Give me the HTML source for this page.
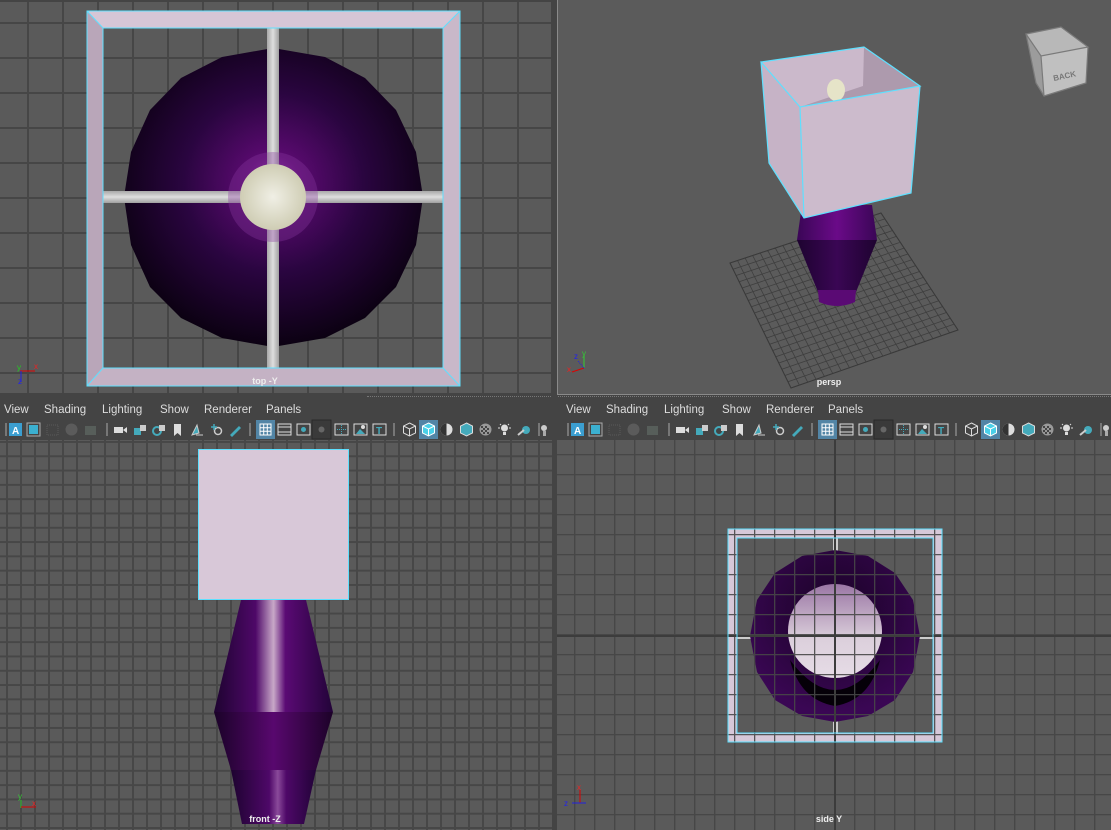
<!DOCTYPE html>
<html><head><meta charset="utf-8">
<style>
*{margin:0;padding:0;box-sizing:border-box}
body{width:1111px;height:830px;background:#444;overflow:hidden;position:relative;font-family:"Liberation Sans",sans-serif}
.vp{position:absolute;background-color:#5a5a5a;overflow:hidden}
.lbl{position:absolute;color:#eee;font-size:9px;font-weight:bold;transform:translateX(-50%)}
.menu{position:absolute;height:22px;background:#444;color:#ddd;font-size:11.5px}
.menu span{position:absolute;top:6px}
.tb{position:absolute;top:420px;height:19px;width:552px;background:#444}
.ic{position:absolute;top:2px;width:15px;height:15px}
svg{position:absolute;left:0;top:0}
</style></head><body>

<!-- top-left viewport -->
<div class="vp" style="left:0;top:2px;width:551px;height:391px;
background-image:linear-gradient(#464646 2px,transparent 2px),linear-gradient(90deg,#464646 2px,transparent 2px);
background-size:35px 35px;background-position:27px 20px">
<svg width="551" height="391" viewBox="0 2 551 391">
<defs>
<radialGradient id="sph" cx="0.5" cy="0.45" r="0.6">
<stop offset="0" stop-color="#8a2aa0"/><stop offset="0.15" stop-color="#5a0a70"/><stop offset="0.5" stop-color="#2a0540"/><stop offset="1" stop-color="#050008"/></radialGradient>
<radialGradient id="ball" cx="0.5" cy="0.5" r="0.5"><stop offset="0" stop-color="#f0efe5"/><stop offset="1" stop-color="#cfcdb4"/></radialGradient>
<linearGradient id="rodv" x1="0" x2="1"><stop offset="0" stop-color="#a9a9a9"/><stop offset="0.5" stop-color="#dedede"/><stop offset="1" stop-color="#a0a0a0"/></linearGradient>
<linearGradient id="rodh" x1="0" x2="0" y1="0" y2="1"><stop offset="0" stop-color="#a9a9a9"/><stop offset="0.5" stop-color="#dedede"/><stop offset="1" stop-color="#a0a0a0"/></linearGradient>
</defs>
<polygon points="273,48 325,57 365,78 396,110 416,152 423,197 416,245 396,287 365,318 325,338 273,347 222,338 181,318 150,287 131,245 124,197 131,152 150,110 181,78 222,57" fill="url(#sph)"/>
<rect x="267" y="28" width="12" height="340" fill="url(#rodv)"/>
<rect x="103" y="191" width="340" height="12" fill="url(#rodh)"/>
<circle cx="273" cy="197" r="45" fill="#8a3aa0" opacity="0.35"/>
<circle cx="273" cy="197" r="33" fill="url(#ball)"/>
<path d="M87,11H460V386H87Z M103,28V368H443V28Z" fill="#d6c6d6" fill-rule="evenodd"/>
<path d="M87,11L103,28V368L87,386Z" fill="#b9a6b9"/>
<path d="M87,386L103,368H443L460,386Z" fill="#c4b2c4"/>
<path d="M460,11L443,28V368L460,386Z" fill="#c9b8c9"/>
<path d="M87,11H460V386H87Z M103,28V368H443V28Z M87,11L103,28 M460,11L443,28 M87,386L103,368 M460,386L443,368" fill="none" stroke="#5ee0ff" stroke-width="1"/>
<line x1="20" y1="371" x2="35" y2="371" stroke="#d00" stroke-width="1"/>
<line x1="21" y1="371" x2="21" y2="382" stroke="#22d" stroke-width="1"/>
<text x="17" y="370" fill="#2c2" font-size="8" font-family="Liberation Sans">y</text>
<text x="34" y="369" fill="#e22" font-size="8" font-family="Liberation Sans">x</text>
<text x="18" y="384" fill="#22e" font-size="8" font-family="Liberation Sans">z</text>
</svg>
<div class="lbl" style="left:265px;top:374px">top -Y</div>
</div>

<!-- top-right viewport -->
<div class="vp" style="left:557px;top:0;width:554px;height:395px;background:#5b5b5b;border-left:1px solid #8a8a8a;border-bottom:1px solid #8a8a8a">
<svg width="554" height="395" viewBox="557 0 554 395">
<defs>
<linearGradient id="vase" x1="0" x2="1"><stop offset="0" stop-color="#3a0656"/><stop offset="0.5" stop-color="#6a0a88"/><stop offset="1" stop-color="#3a0656"/></linearGradient>
<linearGradient id="vase2" x1="0" x2="1"><stop offset="0" stop-color="#1e0330"/><stop offset="0.5" stop-color="#3a0654"/><stop offset="1" stop-color="#1e0330"/></linearGradient>
</defs>
<g stroke="#3e3e3e" stroke-width="0.8" fill="none" id="pgrid"></g>
<polygon points="729,263 880,213 957,330 790,388" fill="none" stroke="#3a3a3a"/>
<path d="M801,205 L871,205 L876,240 L796,240Z" fill="url(#vase)"/>
<path d="M796,240 L876,240 L855,292 L817,292Z" fill="url(#vase2)"/>
<path d="M817,290 L855,290 L854,302 Q836,310 818,302Z" fill="#5a0a74"/>
<polygon points="760,62 863,47 919,86 799,107" fill="#ad9aad"/>
<polygon points="760,62 863,47 862,86 799,107" fill="#cbb9cb"/>
<ellipse cx="835" cy="90" rx="9" ry="11" fill="#e6e4c8"/>
<polygon points="760,62 799,107 803,218 768,163" fill="#c6b3c6"/>
<polygon points="799,107 919,86 910,193 803,218" fill="#ccbbcc"/>
<path d="M760,62L863,47L919,86L799,107Z M760,62L768,163L803,218L910,193L919,86 M799,107L803,218" fill="none" stroke="#5ee0ff" stroke-width="1.2"/>
<polygon points="1025,34 1060,27 1087,47 1040,56" fill="#b8b8b8"/>
<polygon points="1025,34 1040,56 1043,96 1035,83" fill="#9c9c9c"/>
<polygon points="1040,56 1087,47 1085,83 1043,96" fill="#c0c0c0"/>
<path d="M1025,34L1060,27L1087,47L1040,56Z M1040,56L1043,96 M1087,47L1085,83L1043,96L1035,83L1025,34" fill="none" stroke="#7a7a7a" stroke-width="1.2"/>
<text x="1052" y="79" fill="#777" font-size="8" font-weight="bold" font-family="Liberation Sans" transform="rotate(-12 1062 76)">BACK</text>
<line x1="583" y1="355" x2="583" y2="368" stroke="#3c3"/>
<line x1="583" y1="368" x2="571" y2="372" stroke="#d00"/>
<line x1="583" y1="368" x2="577" y2="361" stroke="#22d" stroke-dasharray="1,1"/>
<text x="581" y="356" fill="#3c3" font-size="8">y</text>
<text x="573" y="359" fill="#22e" font-size="8">z</text>
<text x="566" y="372" fill="#e22" font-size="8">x</text>
</svg>
<div class="lbl" style="left:271px;top:377px">persp</div>
</div>
<div style="position:absolute;left:367px;top:396px;width:744px;height:1px;border-top:1px dotted #777"></div>

<!-- bottom menus -->
<div class="menu" style="left:0;top:398px;width:552px"><span style="left:4px">View</span><span style="left:44px">Shading</span><span style="left:102px">Lighting</span><span style="left:160px">Show</span><span style="left:204px">Renderer</span><span style="left:266px">Panels</span></div>
<div class="menu" style="left:557px;top:398px;width:554px"><span style="left:9px">View</span><span style="left:49px">Shading</span><span style="left:107px">Lighting</span><span style="left:165px">Show</span><span style="left:209px">Renderer</span><span style="left:271px">Panels</span></div>
<div class="tb" id="tb1" style="left:0"></div>
<div class="tb" id="tb2" style="left:562px;width:549px"></div>

<!-- front viewport -->
<div class="vp" style="left:0;top:440px;width:552px;height:390px;
background-image:linear-gradient(#474747 2px,transparent 2px),linear-gradient(90deg,#474747 2px,transparent 2px);
background-size:14px 14.3px;background-position:6px 1px">
<svg width="552" height="390" viewBox="0 440 552 390">
<defs>
<linearGradient id="fv" x1="0" x2="1"><stop offset="0" stop-color="#1e0330"/><stop offset="0.35" stop-color="#4e0868"/><stop offset="0.5" stop-color="#c8a8c8"/><stop offset="0.6" stop-color="#5a0a74"/><stop offset="1" stop-color="#220338"/></linearGradient>
<linearGradient id="fv2" x1="0" x2="1"><stop offset="0" stop-color="#1a0228"/><stop offset="0.5" stop-color="#58086e"/><stop offset="1" stop-color="#1c0228"/></linearGradient>
<linearGradient id="fv3" x1="0" x2="1"><stop offset="0" stop-color="#1e0330"/><stop offset="0.45" stop-color="#4e0868"/><stop offset="0.55" stop-color="#8a4a9a"/><stop offset="0.65" stop-color="#4e0868"/><stop offset="1" stop-color="#220338"/></linearGradient>
</defs>
<path d="M241,600 L306,600 L333,712 L214,712Z" fill="url(#fv)"/>
<path d="M214,712 L333,712 L316,770 L231,770Z" fill="url(#fv2)"/>
<path d="M231,770 L316,770 L304,824 L242,824Z" fill="url(#fv3)"/>
<rect x="198.5" y="449.5" width="150" height="150" fill="#d8c8d8" stroke="#5ee0ff"/>
<line x1="21" y1="800" x2="21" y2="808" stroke="#3c3"/>
<line x1="21" y1="807" x2="36" y2="807" stroke="#d00"/>
<text x="18" y="799" fill="#3c3" font-size="8">y</text>
<text x="32" y="806" fill="#e22" font-size="8">x</text>
</svg>
<div class="lbl" style="left:265px;top:374px">front -Z</div>
</div>

<!-- side viewport -->
<div class="vp" style="left:557px;top:440px;width:554px;height:390px">
<svg width="554" height="390" viewBox="557 440 554 390">
<defs>
<radialGradient id="ring" cx="0.5" cy="0.35" r="0.6"><stop offset="0" stop-color="#1a0326"/><stop offset="0.6" stop-color="#2c0540"/><stop offset="1" stop-color="#3a0754"/></radialGradient>
<linearGradient id="inn" x1="0" y1="0" x2="0" y2="1"><stop offset="0" stop-color="#9a76a4"/><stop offset="0.6" stop-color="#dcd0dc"/><stop offset="1" stop-color="#e6dce6"/></linearGradient>
<pattern id="sg" width="20" height="20" patternUnits="userSpaceOnUse" x="14" y="14"><path d="M0,0.5H20M0.5,0V20" stroke="#474747" stroke-width="1.6" fill="none"/></pattern>
</defs>
<rect x="557" y="440" width="554" height="390" fill="#5a5a5a"/>
<rect x="557" y="440" width="554" height="390" fill="url(#sg)"/>
<path d="M728,529H942V742H728Z M737,538V733H933V538Z" fill="#d6c8d8" fill-rule="evenodd"/>
<rect x="833" y="538" width="5" height="14" fill="#ccc"/>
<rect x="833" y="720" width="5" height="13" fill="#ccc"/>
<rect x="737" y="634" width="14" height="5" fill="#ccc"/>
<rect x="919" y="634" width="14" height="5" fill="#ccc"/>
<polygon points="835,550 868,556 895,573 913,600 920,636 913,672 895,700 868,716 835,722 802,716 775,700 757,672 750,636 757,600 775,573 802,556" fill="url(#ring)"/>
<path d="M790,660 Q835,720 880,660 Q870,700 835,706 Q800,700 790,660Z" fill="#050008"/>
<circle cx="835" cy="631" r="47" fill="url(#inn)"/>
<rect x="557" y="440" width="554" height="390" fill="url(#sg)" opacity="0.9"/>
<line x1="835" y1="440" x2="835" y2="830" stroke="#3c3c3c" stroke-width="2"/>
<line x1="557" y1="636" x2="1111" y2="636" stroke="#3c3c3c" stroke-width="2"/>
<path d="M728,529H942V742H728Z M737,538V733H933V538Z" fill="none" stroke="#5ee0ff" stroke-width="1"/>
<line x1="580" y1="790" x2="580" y2="803" stroke="#d00"/>
<line x1="572" y1="803" x2="586" y2="803" stroke="#22d"/>
<text x="577" y="790" fill="#e22" font-size="8">x</text>
<text x="564" y="806" fill="#22e" font-size="8">z</text>
</svg>
<div class="lbl" style="left:272px;top:374px">side Y</div>
</div>

<div style="position:absolute;left:552px;top:0;width:5px;height:830px;background:#444"></div>

<script>
(function(){
 var g=document.getElementById('pgrid');var L=[729,263],T=[880,213],R=[957,330],B=[790,388];
 function lerp(a,b,t){return [a[0]+(b[0]-a[0])*t,a[1]+(b[1]-a[1])*t]}
 var s='',n=20;
 for(var i=0;i<=n;i++){var t=i/n;var p=lerp(L,T,t),q=lerp(B,R,t);s+='M'+p[0]+','+p[1]+'L'+q[0]+','+q[1];
 p=lerp(L,B,t);q=lerp(T,R,t);s+='M'+p[0]+','+p[1]+'L'+q[0]+','+q[1];}
 var path=document.createElementNS('http://www.w3.org/2000/svg','path');path.setAttribute('d',s);g.appendChild(path);
})();
(function(){
 var xs=[15,33,52,71,90,120,139,158,177,196,216,234,265,284,303,321,341,360,379,409,428,446,466,485,504,523,546];
 var seps=[5,106,249,393,538];
 var icons={
 15:'<rect x="1" y="1" width="13" height="13" fill="#3b9ed0"/><text x="4" y="12" fill="#fff" font-size="10" font-weight="bold" font-family="Liberation Sans">A</text>',
 33:'<rect x="1" y="1" width="13" height="13" fill="none" stroke="#aaa"/><rect x="3" y="3" width="9" height="9" fill="#3bb0d0"/>',
 52:'<rect x="2" y="3" width="11" height="10" fill="none" stroke="#5a5a5a" stroke-dasharray="1,1"/>',
 71:'<circle cx="7.5" cy="7.5" r="6" fill="#5b5b5b"/>',
 90:'<rect x="2" y="4" width="11" height="9" fill="#575e5a"/>',
 120:'<rect x="1" y="5" width="9" height="6" fill="#ddd"/><path d="M10,8l4,-3v6z" fill="#ddd"/>',
 139:'<rect x="2" y="6" width="7" height="7" fill="#4ab"/><rect x="8" y="3" width="6" height="6" fill="#ccc"/>',
 158:'<circle cx="6" cy="9" r="4" fill="none" stroke="#4ab" stroke-width="2"/><rect x="8" y="3" width="6" height="6" fill="#ccc"/>',
 177:'<path d="M4,2h7v12l-3.5,-3l-3.5,3z" fill="#ddd"/>',
 196:'<path d="M3,13l5,-10l2,8zM7,13h7" stroke="#ccc" fill="#4ab"/>',
 216:'<circle cx="9" cy="9" r="3.5" fill="none" stroke="#ccc" stroke-width="1.5"/><path d="M2,5h6M5,2v6" stroke="#4ab" stroke-width="1.5"/>',
 234:'<path d="M3,13l9,-9l2,2l-9,9z" fill="#4ab"/>',
 265:'<rect x="-2" y="-2" width="19" height="19" fill="#5285a6"/><rect x="2" y="2" width="11" height="11" fill="none" stroke="#fff"/><path d="M5.7,2v11M9.3,2v11M2,5.7h11M2,9.3h11" stroke="#fff"/>',
 284:'<rect x="1" y="2" width="13" height="11" fill="none" stroke="#ddd"/><path d="M1,5h13M1,10h13" stroke="#ddd"/>',
 303:'<rect x="1" y="2" width="13" height="11" fill="none" stroke="#ddd"/><circle cx="7.5" cy="7.5" r="2.5" fill="#4ab"/>',
 321:'<rect x="-2" y="-2" width="19" height="19" fill="#3a3a3a" stroke="#2a2a2a"/><circle cx="7.5" cy="7.5" r="3" fill="#666"/>',
 341:'<rect x="1" y="2" width="13" height="11" fill="none" stroke="#ddd"/><path d="M7.5,3v9M3,7.5h9" stroke="#4ab" stroke-dasharray="1,1"/>',
 360:'<rect x="1" y="2" width="13" height="11" fill="none" stroke="#ddd"/><path d="M3,12l4,-5l5,5z" fill="#4ab"/><circle cx="10" cy="5" r="2" fill="#ddd"/>',
 379:'<rect x="1" y="2" width="13" height="11" fill="none" stroke="#ddd"/><text x="4" y="12" fill="#4ab" font-size="10" font-weight="bold" font-family="Liberation Sans">T</text>',
 409:'<path d="M7.5,1l6,3v7l-6,3l-6,-3v-7z M1.5,4l6,3l6,-3 M7.5,7v7" fill="none" stroke="#ddd"/>',
 428:'<rect x="-2" y="-2" width="19" height="19" fill="#5285a6"/><path d="M7.5,1l6,3v7l-6,3l-6,-3v-7z" fill="#4ad0e8" stroke="#fff"/><path d="M1.5,4l6,3l6,-3 M7.5,7v7" stroke="#fff" fill="none"/>',
 446:'<circle cx="7.5" cy="7.5" r="6" fill="#ddd"/><path d="M7.5,1.5a6,6 0 0 0 0,12z" fill="#333"/>',
 466:'<path d="M7.5,1l6,3v7l-6,3l-6,-3v-7z" fill="#4ab" stroke="#ddd"/>',
 485:'<circle cx="7.5" cy="7.5" r="6" fill="#999"/><path d="M3,4h2v2h-2zM7,4h2v2h-2zM5,6h2v2h-2zM9,6h2v2h-2zM3,8h2v2h-2zM7,8h2v2h-2zM5,10h2v2h-2zM9,10h2v2h-2z" fill="#444"/>',
 504:'<circle cx="7.5" cy="6" r="3.5" fill="#ddd"/><rect x="6" y="10" width="3" height="3" fill="#ddd"/><path d="M1,6h2M12,6h2M3,2l1,1M12,2l-1,1" stroke="#ddd"/>',
 523:'<circle cx="10" cy="8" r="4" fill="#4ab"/><path d="M2,13l6,-5" stroke="#ccc" stroke-width="2"/>',
 546:'<circle cx="5" cy="6" r="3" fill="#ccc"/><rect x="4" y="9" width="3" height="5" fill="#aaa"/>'
 };
 ['tb1','tb2'].forEach(function(id){
  var tb=document.getElementById(id);var h='';
  seps.forEach(function(x){h+='<div style="position:absolute;left:'+x+'px;top:3px;width:2px;height:13px;background:#777"></div>'});
  xs.forEach(function(x){h+='<svg class="ic" style="left:'+(x-7)+'px;top:2px;position:absolute;overflow:visible" width="15" height="15" viewBox="0 0 15 15">'+(icons[x]||'')+'</svg>'});
  tb.innerHTML=h;
 });
})();
</script>
</body></html>
